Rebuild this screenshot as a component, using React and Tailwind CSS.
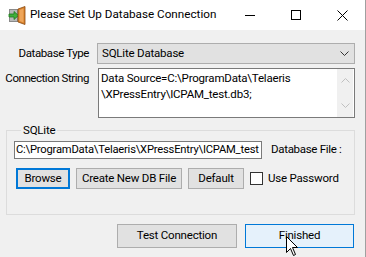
import React from "react";

const font = { fontFamily: '"Segoe UI", Roboto, "Liberation Sans", sans-serif' };

function DoorIcon() {
  return (
    <svg width="18" height="19" viewBox="0 0 18 19">
      <rect x="1" y="3" width="9" height="13" fill="#8a8a8a" />
      <rect x="2" y="4" width="7" height="11" fill="#b9b9b9" />
      <path d="M1 8 H6 V5.5 L10.5 9.5 L6 13.5 V11 H1 Z" fill="#3fae3a" stroke="#1e7a1c" strokeWidth="0.8" />
      <path d="M10 3 L17 0.5 V18.5 L10 16 Z" fill="#d9822b" stroke="#8a4a12" strokeWidth="0.8" />
      <path d="M11.5 4 L15.5 2.5 V16.5 L11.5 15 Z" fill="#eea55a" />
    </svg>
  );
}

function Chevron({ up }) {
  return (
    <svg width="9" height="5" viewBox="0 0 9 5">
      <path d={up ? "M0.5 4.5 L4.5 0.5 L8.5 4.5" : "M0.5 0.5 L4.5 4.5 L8.5 0.5"} fill="none" stroke="currentColor" strokeWidth="1" />
    </svg>
  );
}

export default function App() {
  return (
    <div className="relative w-[366px] h-[257px] overflow-hidden bg-[#f0f0f0] border-r border-[#a0a0a0] text-[11.5px] tracking-[-0.2px] text-black flex flex-col" style={font}>
      {/* title bar */}
      <div className="h-[30px] bg-white flex items-center shrink-0">
        <div className="ml-[8px] mt-[1px]">
          <DoorIcon />
        </div>
        <span className="ml-[4px] text-[11.7px] tracking-normal">Please Set Up Database Connection</span>
        <div className="ml-auto flex items-center h-full">
          <div className="w-[46px] h-full flex items-center justify-center">
            <div className="w-[10px] h-px bg-black" />
          </div>
          <div className="w-[46px] h-full flex items-center justify-center">
            <div className="w-[10px] h-[10px] border border-black" />
          </div>
          <div className="w-[46px] h-full flex items-center justify-center">
            <svg width="11" height="11" viewBox="0 0 11 11">
              <path d="M0.5 0.5 L10.5 10.5 M10.5 0.5 L0.5 10.5" stroke="black" strokeWidth="1" />
            </svg>
          </div>
        </div>
      </div>

      <div className="flex flex-col pl-[6px] pr-[10px]">
        {/* database type */}
        <div className="flex items-center mt-[13px]">
          <div className="w-[83px] flex justify-end whitespace-nowrap tracking-[-0.4px]">Database Type</div>
          <div className="ml-[8px] w-[258px] h-[21px] bg-[#e1e1e1] border border-[#adadad] flex items-center pl-[4px] pr-[5px]">
            <span>SQLite Database</span>
            <span className="ml-auto text-[#333]">
              <Chevron />
            </span>
          </div>
        </div>

        {/* connection string */}
        <div className="flex items-start mt-[4px]">
          <div className="w-[83px] flex justify-end whitespace-nowrap mt-[2px] tracking-[-0.45px]">Connection String</div>
          <div className="ml-[9px] w-[257px] h-[50px] bg-white border border-[#7a7a7a] flex">
            <div className="flex-1 pl-[2px] pt-[1px] leading-[16px]">
              <div>Data Source=C:\ProgramData\Telaeris</div>
              <div>\XPressEntry\ICPAM_test.db3;</div>
            </div>
            <div className="w-[16px] mr-[1px] bg-[#f0f0f0] flex flex-col items-center justify-between py-[9px] text-[#c0c0c0]">
              <Chevron up />
              <Chevron />
            </div>
          </div>
        </div>

        {/* SQLite group */}
        <fieldset className="mt-[5px] w-[349px] h-[92px] border border-[#dcdcdc] pl-[7px]">
          <legend className="ml-[7px] px-[2px] leading-[14px]">SQLite</legend>
          <div className="flex items-center mt-[4px]">
            <div className="w-[248px] h-[18px] bg-white border border-[#7a7a7a] overflow-hidden whitespace-nowrap pl-[1px] leading-[16px] text-[11.2px] tracking-[-0.2px]">
              C:\ProgramData\Telaeris\XPressEntry\ICPAM_test
            </div>
            <span className="ml-[9px] whitespace-nowrap tracking-[-0.3px]">Database File :</span>
          </div>
          <div className="flex items-center mt-[9px] ml-[2px]">
            <button className="w-[54px] h-[21px] bg-[#e1e1e1] border-2 border-[#0078d7] flex items-center justify-center">
              Browse
            </button>
            <button className="ml-[6px] w-[106px] h-[21px] bg-[#e1e1e1] border border-[#adadad] flex items-center justify-center whitespace-nowrap">
              Create New DB File
            </button>
            <button className="ml-[6px] w-[56px] h-[21px] bg-[#e1e1e1] border border-[#adadad] flex items-center justify-center">
              Default
            </button>
            <div className="ml-[6px] w-[13px] h-[13px] bg-white border border-[#333]" />
            <span className="ml-[5px]">Use Password</span>
          </div>
        </fieldset>

        {/* bottom buttons */}
        <div className="flex justify-end mt-[9px] pr-[1px]">
          <button className="w-[120px] h-[24px] bg-[#e1e1e1] border border-[#adadad] flex items-center justify-center">
            Test Connection
          </button>
          <button className="ml-[8px] w-[109px] h-[24px] bg-[#e5f1fb] border border-[#0078d7] flex items-center justify-center">
            Finished
          </button>
        </div>
      </div>

      {/* mouse cursor */}
      <svg className="absolute left-[286px] top-[236px]" width="13" height="21" viewBox="0 0 13 21">
        <path d="M0.5 0.5 V16.5 L4.5 12.5 L7.5 19.5 L9.5 18.5 L6.5 11.5 H11.5 Z" fill="white" stroke="black" strokeWidth="1" />
      </svg>
    </div>
  );
}
